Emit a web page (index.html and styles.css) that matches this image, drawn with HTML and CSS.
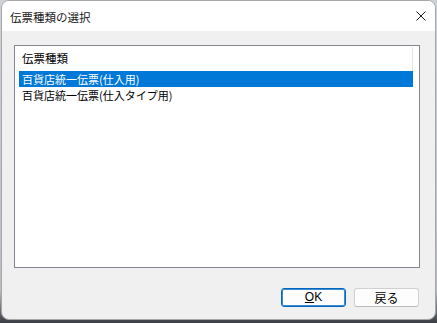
FILE: index.html
```html
<!DOCTYPE html>
<html lang="ja">
<head>
<meta charset="utf-8">
<link rel="stylesheet" href="styles.css">
</head>
<body>
<div class="window">
  <div class="titlebar">
    <span class="title">伝票種類の選択</span>
    <svg class="close" width="10" height="10" viewBox="0 0 10 10"><path d="M0.5 0.5 L9.5 9.5 M9.5 0.5 L0.5 9.5" stroke="#1a1a1a" stroke-width="1" fill="none"/></svg>
  </div>
  <div class="content">
    <div class="listbox">
      <div class="header"><span class="hcell">伝票種類</span></div>
      <div class="row selected">百貨店統一伝票(仕入用)</div>
      <div class="row">百貨店統一伝票(仕入タイプ用)</div>
    </div>
    <div class="buttons">
      <button class="btn default"><span class="ul">O</span>K</button>
      <button class="btn">戻る</button>
    </div>
  </div>
</div>
</body>
</html>
```
FILE: styles.css
```css
html, body {
  margin: 0;
  padding: 0;
}
body {
  width: 437px;
  height: 323px;
  background: linear-gradient(to bottom, #cfd3d8 0%, #b9bec4 90%, #3a3d42 100%);
  font-family: "Noto Sans CJK JP", "Noto Sans", sans-serif;
  font-size: 12px;
  color: #000;
  overflow: hidden;
}
.window {
  box-sizing: border-box;
  margin-left: 1px;
  width: 435px;
  height: 320px;
  border: 1px solid #a7a7a7;
  border-radius: 8px;
  overflow: hidden;
  display: flex;
  flex-direction: column;
  background: #f0f0f0;
}
.titlebar {
  height: 30px;
  background: #ffffff;
  display: flex;
  align-items: center;
  justify-content: space-between;
  padding: 0 9px 0 8px;
  flex-shrink: 0;
}
.title {
  font-size: 11.5px;
  line-height: 14px;
  color: #1a1a1a;
  margin-top: 1px;
}
.close {
  display: block;
  margin-bottom: 1px;
}
.content {
  flex: 1;
  display: flex;
  flex-direction: column;
  padding: 14px 15px 0 12px;
}
.listbox {
  box-sizing: border-box;
  width: 406px;
  height: 223px;
  background: #ffffff;
  border: 1px solid #828790;
  padding: 1px 6px 0 4px;
}
.header {
  height: 24px;
  display: flex;
  align-items: center;
  border-right: 1px solid #e5e5e5;
}
.hcell {
  padding-left: 3px;
  line-height: 16px;
  margin-top: -2px;
  font-size: 11.5px;
}
.row {
  height: 16px;
  line-height: 16px;
  padding-left: 3px;
  white-space: nowrap;
  font-size: 11px;
}
.row.selected {
  background: #0078d7;
  color: #ffffff;
}
.buttons {
  display: flex;
  justify-content: flex-end;
  gap: 8px;
  margin-top: 20px;
  padding-right: 1px;
}
.btn {
  box-sizing: border-box;
  width: 65px;
  height: 19px;
  padding: 0;
  background: #fdfdfd;
  border: 1px solid #d0d0d0;
  border-bottom-color: #bcbcbc;
  border-radius: 3px;
  font-family: "Noto Sans CJK JP", "Noto Sans", sans-serif;
  font-size: 12px;
  line-height: 15px;
  color: #000;
}
.btn.default {
  border: 1px solid #0067c0;
  box-shadow: inset 0 0 0 1px #3d8bd1;
  font-family: "Liberation Sans", "Noto Sans CJK JP", sans-serif;
}
.ul {
  text-decoration: underline;
}
```
